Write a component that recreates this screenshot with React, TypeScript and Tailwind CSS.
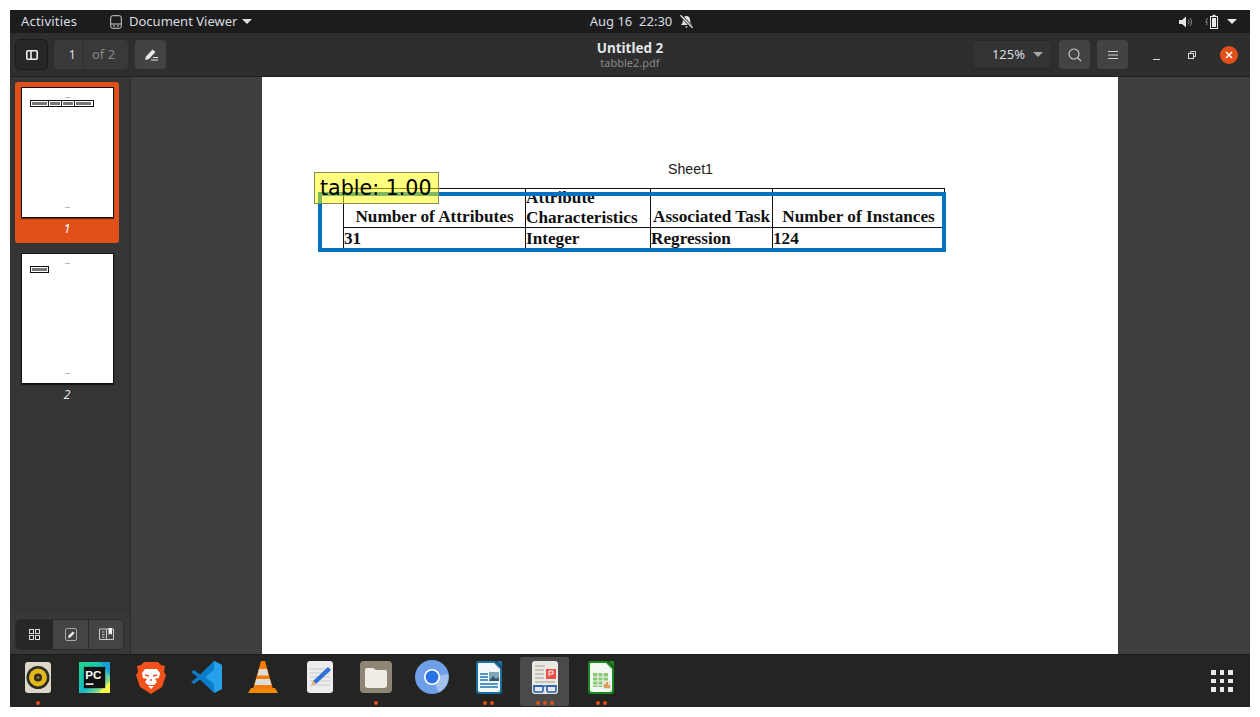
function Caret({ className = "" }: { className?: string }) {
  return (
    <svg width="10" height="5" viewBox="0 0 10 5" className={className}>
      <path d="M0 0h10L5 5z" fill="currentColor" />
    </svg>
  );
}

const ui = "font-['Noto_Sans',sans-serif]";

function TopBar() {
  return (
    <div className={`grid h-[23px] shrink-0 grid-cols-[1fr_auto_1fr] items-center bg-[#1c1c1c] text-[13px] text-[#d8dde0] ${ui}`}>
      <div className="flex items-center">
        <div className="w-[99px] pl-[11px] tracking-[0.2px]">Activities</div>
        <svg width="12" height="14" viewBox="0 0 12 14" className="ml-px text-[#d0d0d0]" fill="none" stroke="currentColor">
          <rect x="0.7" y="0.7" width="10.6" height="12.6" rx="2" />
          <path d="M1 9h10M3 11h2M7 11h2" />
        </svg>
        <div className="ml-[7px]">Document Viewer</div>
        <Caret className="ml-[5px] text-[#e0e0e0]" />
      </div>
      <div className="ml-[24px] flex items-center">
        <span>Aug 16&nbsp; 22:30</span>
        <svg width="15" height="15" viewBox="0 0 15 15" className="ml-[7px] text-[#e2e2e2]">
          <path d="M7.5 2c2.5 0 3.5 2 3.6 4l.4 3 1.5 2H2l1.5-2 .4-3C4 4 5 2 7.5 2zM6 12.4h3l-1.5 1.6z" fill="currentColor" />
          <path d="M1.5 1.2l12 12.6" stroke="#1c1c1c" strokeWidth="3" />
          <path d="M1.5 1.2l12 12.6" stroke="currentColor" strokeWidth="1.4" />
        </svg>
      </div>
      <div className="flex items-center justify-end">
        <svg width="14" height="12" viewBox="0 0 14 12" className="mr-[12px] text-[#e4e4e4]">
          <path d="M0 4h3l4-3.5v11L3 8H0z" fill="currentColor" />
          <path d="M9 3.5a3.5 3.5 0 0 1 0 5M11 2a6 6 0 0 1 0 8" stroke="#8c8c8c" fill="none" />
        </svg>
        <svg width="14" height="15" viewBox="0 0 14 15" className="mr-[8px] text-[#e8e8e8]">
          <path d="M2.5 4L0.8 8h1.4L1.5 11" stroke="#8c8c8c" fill="none" />
          <rect x="5.5" y="2.5" width="7" height="12" fill="none" stroke="currentColor" />
          <rect x="7" y="4" width="4" height="9" fill="currentColor" />
          <rect x="7.5" y="0.8" width="3" height="1.7" fill="currentColor" />
        </svg>
        <Caret className="mr-[13px] text-[#e8e8e8]" />
      </div>
    </div>
  );
}

function ToolButton({ children, className = "" }: { children: React.ReactNode; className?: string }) {
  return (
    <div className={`flex h-[29px] w-[31px] items-center justify-center rounded-[4px] bg-[#434343] text-[#dedede] ${className}`}>
      {children}
    </div>
  );
}

function ToolBar() {
  return (
    <div className={`grid h-[44px] shrink-0 grid-cols-[1fr_auto_1fr] items-center border-b border-b-[#1f1f1f] bg-[#2e2e2e] pl-[5px] pr-[12px] ${ui}`}>
      <div className="flex items-center">
        <div className="flex h-[31px] w-[33px] items-center justify-center rounded-[5px] border border-[#1b1b1b] bg-[#272727]">
          <svg width="12" height="10" viewBox="0 0 12 10" fill="none" stroke="#eeeeee" strokeWidth="1.6">
            <rect x="0.8" y="0.8" width="10.4" height="8.4" rx="1" />
            <path d="M5 1v8" />
          </svg>
        </div>
        <div className="ml-[6px] flex h-[29px] w-[74px] items-center rounded-[4px] bg-[#393939] text-[13px]">
          <div className="flex h-full w-[30px] items-center justify-end border-r border-r-[#2e2e2e] pr-[7px] text-[#d8dde0]">1</div>
          <div className="pl-[8px] text-[#85888a]">of 2</div>
        </div>
        <ToolButton className="ml-[7px]">
          <svg width="14" height="13" viewBox="0 0 14 13">
            <path d="M1 12l1-3.5L8.5 1.5l3 2.5L5 11z" fill="#e8e8e8" />
            <path d="M7 12h7M9 9.5h5" stroke="#e8e8e8" />
          </svg>
        </ToolButton>
      </div>
      <div className="flex flex-col items-center pl-[7px] pt-px">
        <div className="text-[13.5px] font-bold leading-[15px] text-[#e4e6e8]">Untitled 2</div>
        <div className="text-[11px] leading-[13px] text-[#85888a]">tabble2.pdf</div>
      </div>
      <div className="flex items-center justify-end">
        <div className="flex h-[29px] w-[80px] items-center justify-end rounded-[4px] border border-[#282828] bg-[#333333] pr-[8px] text-[13px] text-[#d8dde0]">
          <span className="mr-[8px]">125%</span>
          <Caret className="text-[#a8a8a8]" />
        </div>
        <ToolButton className="ml-[7px]">
          <svg width="14" height="14" viewBox="0 0 14 14" fill="none" stroke="#d4d4d4" strokeWidth="1.1">
            <circle cx="6" cy="6" r="5" />
            <path d="M9.8 9.8L13 13" />
          </svg>
        </ToolButton>
        <ToolButton className="ml-[7px]">
          <svg width="10" height="10" viewBox="0 0 10 10" stroke="#cfcfcf">
            <path d="M0 1.5h10M0 5h10M0 8.5h10" />
          </svg>
        </ToolButton>
        <div className="ml-[25px] h-px w-[7px] translate-y-[5px] bg-[#dcdcdc]" />
        <svg width="8" height="8" viewBox="0 0 8 8" fill="none" stroke="#dcdcdc" className="ml-[28px]">
          <rect x="0.5" y="2.5" width="5" height="5" />
          <path d="M2.5 2.5v-2h5v5h-2" />
        </svg>
        <div className="ml-[24px] flex h-[18px] w-[18px] items-center justify-center rounded-full bg-[#e2501a]">
          <svg width="8" height="8" viewBox="0 0 8 8" stroke="#ffffff" strokeWidth="1.5">
            <path d="M1 1l6 6M7 1l-6 6" />
          </svg>
        </div>
      </div>
    </div>
  );
}

function Thumb({ columns }: { columns: number[] }) {
  const total = columns.reduce((a, b) => a + b, 0);
  return (
    <div className="flex h-[131px] w-[93px] flex-col border border-[#111111] bg-white px-[8px] pt-[9px] shadow-[0_1px_1px_rgba(0,0,0,.5)]">
      <div className="mx-auto h-px w-[5px] bg-[#b5b5b5]" />
      <div className="mt-[2px] flex h-[7px] border border-[#111111]" style={{ width: total }}>
        {columns.map((w, i) => (
          <div key={i} className="flex flex-col justify-center border-r border-r-[#222222] px-px last:border-r-0" style={{ width: w }}>
            <div className="h-[3px] w-full bg-[#777777]" />
          </div>
        ))}
      </div>
      <div className="mx-auto mb-[9px] mt-auto h-px w-[5px] bg-[#b5b5b5]" />
    </div>
  );
}

function Sidebar() {
  return (
    <div className={`flex w-[121px] shrink-0 flex-col border-r border-r-[#2a2a2a] bg-[#353535] ${ui}`}>
      <div className="flex flex-1 flex-col">
        <div className="ml-[5px] mt-[5px] flex h-[161px] w-[104px] flex-col items-center rounded-[3px] bg-[#e2501a] pt-[5px]">
          <Thumb columns={[19, 14, 13, 18]} />
          <div className="mt-[2px] text-[12px] italic leading-[17px] text-white">1</div>
        </div>
        <div className="ml-[5px] mt-[10px] flex w-[104px] flex-col items-center">
          <Thumb columns={[19]} />
          <div className="mt-[2px] text-[12px] italic leading-[17px] text-[#e6e6e6]">2</div>
        </div>
      </div>
      <div className="flex h-[40px] items-start bg-[#383838] pl-[5px] pt-[5px]">
        <div className="flex h-[31px] w-[109px] overflow-hidden rounded-[5px] border border-[#2a2a2a]">
          <div className="flex w-[37px] items-center justify-center bg-[#272727]">
            <svg width="11" height="11" viewBox="0 0 11 11" fill="none" stroke="#dddddd">
              <rect x="0.5" y="0.5" width="4" height="4" />
              <rect x="6.5" y="0.5" width="4" height="4" />
              <rect x="0.5" y="6.5" width="4" height="4" />
              <rect x="6.5" y="6.5" width="4" height="4" />
            </svg>
          </div>
          <div className="flex w-[36px] items-center justify-center border-r border-r-[#2a2a2a] bg-[#444444]">
            <svg width="12" height="13" viewBox="0 0 12 13">
              <rect x="0.5" y="0.5" width="11" height="12" rx="1.5" fill="none" stroke="#a8a8a8" />
              <path d="M3 10l.6-2.4L7.8 3.4l1.8 1.6L5.4 9.4z" fill="#f0f0f0" />
            </svg>
          </div>
          <div className="flex flex-1 items-center justify-center bg-[#444444]">
            <svg width="15" height="13" viewBox="0 0 15 13">
              <path d="M0.5 1h14v10.5h-14z" fill="none" stroke="#c8c8c8" />
              <path d="M7.5 1v10.5M3 4h2.5M3 6.5h2.5M3 9h2.5" stroke="#c8c8c8" />
              <path d="M9.5 0h3.5v7l-1.7-1.5L9.5 7z" fill="#f0f0f0" />
            </svg>
          </div>
        </div>
      </div>
    </div>
  );
}

function Annotation() {
  return (
    <>
      <div className="absolute left-[56px] top-[115px] h-[60px] w-[628px] border-4 border-[#0070c0]" />
      <div className="absolute left-[52px] top-[95px] flex h-[32px] w-[125px] items-center whitespace-nowrap border border-[#8a8a60] bg-[#ffff00]/50 pl-[5px] font-['DejaVu_Sans',sans-serif] text-[20.6px] text-black">
        table: 1.00
      </div>
    </>
  );
}

function PdfPage() {
  return (
    <div className="relative ml-[131px] h-[577px] w-[856px] bg-white">
      <div className="pl-[406px] pt-[84px] font-['Liberation_Sans',sans-serif] text-[14.2px] leading-[17px] text-[#1a1a1a]">Sheet1</div>
      <div className="ml-[81px] mt-[10px] grid h-[62px] w-[602px] grid-cols-[182px_125px_122px_173px] grid-rows-[39px_21px] border-x border-t border-[#111111] font-['Liberation_Serif',serif] text-[17.2px] font-bold leading-[20px] text-[#111111]">
        <div className="flex items-end justify-center whitespace-nowrap border-b border-r border-[#111111]">Number of Attributes</div>
        <div className="overflow-hidden whitespace-nowrap border-b border-r border-[#111111]">
          <div className="-mt-px">Attribute</div>
          <div>Characteristics</div>
        </div>
        <div className="flex items-end justify-center whitespace-nowrap border-b border-r border-[#111111]">Associated Task</div>
        <div className="flex items-end justify-center whitespace-nowrap border-b border-[#111111] pr-[2px]">Number of Instances</div>
        <div className="border-r border-[#111111] pt-px">31</div>
        <div className="border-r border-[#111111] pt-px">Integer</div>
        <div className="border-r border-[#111111] pt-px">Regression</div>
        <div className="pt-px">124</div>
      </div>
      <Annotation />
    </div>
  );
}

function Dot({ count }: { count: number }) {
  return (
    <div className="flex h-[4px] justify-center gap-[3px]">
      {Array.from({ length: count }).map((_, i) => (
        <span key={i} className="h-[4px] w-[4px] rounded-full bg-[#e2501a]" />
      ))}
    </div>
  );
}

const dockIcons = [
  {
    dots: 1,
    icon: (
      <svg width="28" height="33" viewBox="0 0 28 33">
        <rect x="1" y="1" width="26" height="31" rx="3" fill="#dcd7c8" />
        <circle cx="14" cy="16.5" r="11.5" fill="#2c2a26" />
        <circle cx="14" cy="16.5" r="9" fill="#e2b818" />
        <circle cx="14" cy="16.5" r="4" fill="#2c2a26" />
        <circle cx="14" cy="16.5" r="1.5" fill="#8a7a30" />
      </svg>
    ),
  },
  {
    dots: 0,
    icon: (
      <svg width="31" height="31" viewBox="0 0 32 32">
        <defs>
          <linearGradient id="pc" x1="0" y1="0" x2="1" y2="1">
            <stop offset="0" stopColor="#21d789" />
            <stop offset="0.55" stopColor="#18b8c8" />
            <stop offset="1" stopColor="#fcf84a" />
          </linearGradient>
        </defs>
        <rect width="32" height="32" fill="url(#pc)" />
        <path d="M32 0v14L22 0z" fill="#1a9fd8" />
        <path d="M0 32h32V20L20 32z" fill="#fcf84a" />
        <rect x="5" y="5" width="22" height="22" fill="#111111" />
        <text x="6.5" y="17.5" fontFamily="Liberation Sans, sans-serif" fontWeight="700" fontSize="12" fill="#ffffff">PC</text>
        <rect x="7" y="22" width="8" height="1.6" fill="#ffffff" />
      </svg>
    ),
  },
  {
    dots: 0,
    icon: (
      <svg width="30" height="33" viewBox="0 0 30 33">
        <path d="M8 1h14l3 3 4 1-1 6 2 3-4 12-8 5-3 2-3-2-8-5L0 14l2-3-1-6 4-1z" fill="#f1511b" />
        <path d="M9 8h12l3 4-1 5-4 1 2 3-3 3h-6l-3-3 2-3-4-1-1-5z" fill="#ffffff" />
        <path d="M12 25h6l-3 3z" fill="#ffffff" />
        <path d="M9 14l4 1M21 14l-4 1M14 19h2" stroke="#f1511b" strokeWidth="1.4" />
      </svg>
    ),
  },
  {
    dots: 0,
    icon: (
      <svg width="32" height="32" viewBox="0 0 32 32">
        <path d="M23 0l8 4v24l-8 4L9 18.5 3 23l-3-2 6.5-5L0 11l3-2 6 4.5z" fill="#0a7cc8" />
        <path d="M23 0l8 4v24l-8 4zM23 9l-9 7 9 7z" fill="#26a0ea" fillRule="evenodd" />
      </svg>
    ),
  },
  {
    dots: 0,
    icon: (
      <svg width="30" height="33" viewBox="0 0 30 33">
        <path d="M3 27h24l3 5H0z" fill="#f08a00" />
        <path d="M13 0h4l8 28H5z" fill="#f57c00" />
        <path d="M11 8h8l1.6 6.5H9.4zM8.2 18h13.6l1.7 6H6.5z" fill="#dcdcdc" />
      </svg>
    ),
  },
  {
    dots: 0,
    icon: (
      <svg width="26" height="32" viewBox="0 0 26 32">
        <rect width="26" height="32" rx="3" fill="#ececec" />
        <path d="M3 8h20M3 12h20M3 16h20M3 20h20M3 24h20" stroke="#c9c9c9" />
        <path d="M21 6l3 3L9 23l-3-3z" fill="#2f70d8" />
        <path d="M6 20l3 3-5 2z" fill="#e0b070" />
      </svg>
    ),
  },
  {
    dots: 1,
    icon: (
      <svg width="32" height="32" viewBox="0 0 32 32">
        <rect width="32" height="32" rx="4" fill="#8e8675" />
        <path d="M5 9a2 2 0 0 1 2-2h6l3 2h9a2 2 0 0 1 2 2v13a3 3 0 0 1-3 3H8a3 3 0 0 1-3-3z" fill="#efece6" />
      </svg>
    ),
  },
  {
    dots: 0,
    icon: (
      <svg width="34" height="34" viewBox="0 0 34 34">
        <circle cx="17" cy="17" r="17" fill="#6f9fe8" />
        <path d="M24 32.5L17 17l16-3a17 17 0 0 1-9 18.5z" fill="#a3c1ef" />
        <circle cx="17" cy="17" r="8" fill="#ffffff" />
        <circle cx="17" cy="17" r="6.4" fill="#2a72e8" />
      </svg>
    ),
  },
  {
    dots: 2,
    icon: (
      <svg width="26" height="33" viewBox="0 0 26 33">
        <path d="M2 0h17l7 7v23a3 3 0 0 1-3 3H3a3 3 0 0 1-3-3V2a2 2 0 0 1 2-2z" fill="#17709f" />
        <path d="M2.5 2h15.5l6 6v21a2 2 0 0 1-2 2H4a2 2 0 0 1-2-2V2.5z" fill="#f4f8fb" />
        <path d="M20 0h6v6z" fill="#17709f" />
        <path d="M4 13h8M4 16h8M4 19h8M4 23h18M4 26h18" stroke="#1a78b0" strokeWidth="1.5" />
        <rect x="13" y="11" width="10" height="9" fill="#7fa8b8" />
        <path d="M13 20l4-5 3 3 3-2v4z" fill="#33566a" />
      </svg>
    ),
  },
  {
    dots: 3,
    active: true,
    icon: (
      <svg width="26" height="33" viewBox="0 0 26 33">
        <rect width="26" height="33" rx="3" fill="#ebe8e3" />
        <path d="M3 5h10M3 9h9M3 13h9M3 17h9M3 21h20" stroke="#b9b5ae" strokeWidth="1.3" />
        <rect x="14" y="8" width="10" height="10" fill="#e8504a" />
        <path d="M17 15v-5h4v3h-3" stroke="#ffffff" fill="none" />
        <path d="M1 25h24" stroke="#1f5fae" strokeWidth="1.5" />
        <rect x="2" y="25" width="9" height="6" rx="1.5" fill="none" stroke="#1f5fae" strokeWidth="1.6" />
        <rect x="15" y="25" width="9" height="6" rx="1.5" fill="none" stroke="#1f5fae" strokeWidth="1.6" />
      </svg>
    ),
  },
  {
    dots: 2,
    icon: (
      <svg width="26" height="33" viewBox="0 0 26 33">
        <path d="M2 0h17l7 7v23a3 3 0 0 1-3 3H3a3 3 0 0 1-3-3V2a2 2 0 0 1 2-2z" fill="#1b8a1e" />
        <path d="M2.5 2h15.5l6 6v21a2 2 0 0 1-2 2H4a2 2 0 0 1-2-2V2.5z" fill="#f3f8f2" />
        <path d="M20 0h6v6z" fill="#1b8a1e" />
        <rect x="5" y="12" width="15" height="14" fill="#8ac878" />
        <path d="M5 16h15M5 20h15M5 24h15M10 12v14M15 12v14" stroke="#f3f8f2" />
        <rect x="15" y="20" width="8" height="8" fill="#e8e4dc" />
        <path d="M17 27v-4M19 27v-6M21 27v-3" stroke="#d8802a" strokeWidth="1.4" />
      </svg>
    ),
  },
];

function Dock() {
  return (
    <div className="flex h-[53px] shrink-0 items-stretch border-t border-t-[#1c1c1c] bg-[#242422]">
      {dockIcons.map((item, i) => (
        <div key={i} className="flex w-[56.3px] flex-col items-center pt-[2px]">
          <div className={`flex h-[49px] w-[49px] flex-col items-center justify-center rounded-[2px] ${item.active ? "bg-[#4a4a4a]" : ""}`}>
            <div className="mt-[-1px] flex h-[34px] items-center">{item.icon}</div>
            <div className="mt-[4px] translate-y-[3px]">
              <Dot count={item.dots} />
            </div>
          </div>
        </div>
      ))}
      <div className="ml-auto mr-[17px] grid h-[22px] w-[22px] grid-cols-3 gap-[4px] self-center">
        {Array.from({ length: 9 }).map((_, i) => (
          <span key={i} className="h-[4.5px] w-[4.5px] bg-[#e8e8e8]" />
        ))}
      </div>
    </div>
  );
}

export default function App() {
  return (
    <div className="h-[717px] w-[1260px] overflow-hidden bg-white p-[10px]">
      <div className="flex h-[697px] w-[1240px] flex-col">
        <TopBar />
        <ToolBar />
        <div className="flex h-[577px] shrink-0 bg-[#3f3f3f]">
          <Sidebar />
          <PdfPage />
        </div>
        <Dock />
      </div>
    </div>
  );
}
